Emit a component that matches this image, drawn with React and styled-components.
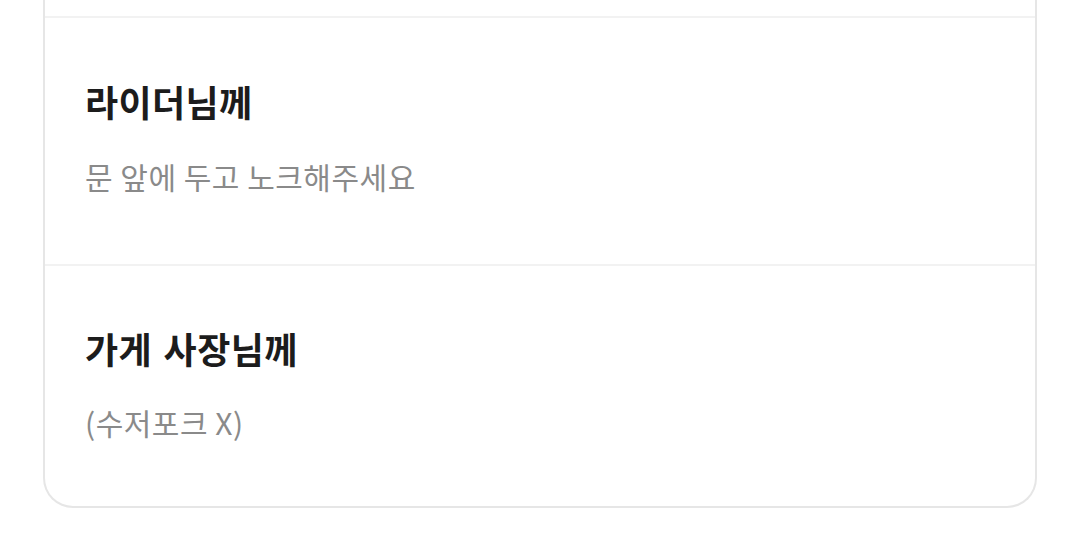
import React from 'react';
import styled, { createGlobalStyle } from 'styled-components';

const GlobalStyle = createGlobalStyle`
  html, body {
    margin: 0;
    padding: 0;
    background: #ffffff;
  }
  body {
    font-family: "Noto Sans CJK KR", "Noto Sans", sans-serif;
  }
`;

const Page = styled.div`
  padding: 0 43px 46px 43px;
`;

const Card = styled.div`
  border: 2px solid #e6e6e6;
  border-top: none;
  border-radius: 0 0 30px 30px;
  background: #ffffff;
  overflow: hidden;
`;

const TopRest = styled.div`
  height: 16px;
`;

const Section = styled.section`
  border-top: 2px solid #f2f2f2;
  padding: ${p => (p.last ? '59px 40px 64px' : '60px 40px 68px')};
  display: flex;
  flex-direction: column;
  gap: ${p => (p.last ? '31px' : '32px')};
`;

const Title = styled.h3`
  margin: 0;
  font-size: 36px;
  line-height: 46px;
  font-weight: 700;
  color: #1c1c1c;
  letter-spacing: 0.4px;
  word-spacing: 3px;
`;

const Note = styled.p`
  margin: 0;
  font-size: 30px;
  line-height: 40px;
  font-weight: 400;
  color: #8a8a8a;
  letter-spacing: 0.5px;
`;

const requests = [
  { to: '라이더님께', text: '문 앞에 두고 노크해주세요' },
  { to: '가게 사장님께', text: '(수저포크 X)' }
];

const App = () => (
  <Page>
    <GlobalStyle />
    <Card>
      <TopRest />
      {requests.map((r, i) => (
        <Section key={r.to} last={i === requests.length - 1}>
          <Title>{r.to}</Title>
          <Note>{r.text}</Note>
        </Section>
      ))}
    </Card>
  </Page>
);

export default App;
